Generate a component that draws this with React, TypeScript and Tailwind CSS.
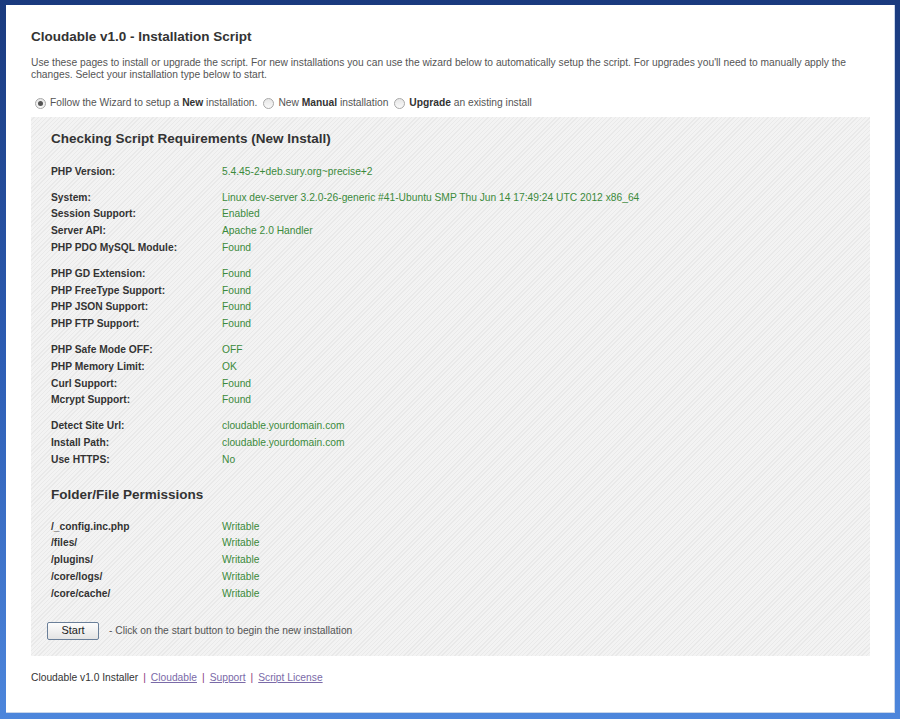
import React from "react";

const groups: [string, string][][] = [
  [["PHP Version:", "5.4.45-2+deb.sury.org~precise+2"]],
  [
    ["System:", "Linux dev-server 3.2.0-26-generic #41-Ubuntu SMP Thu Jun 14 17:49:24 UTC 2012 x86_64"],
    ["Session Support:", "Enabled"],
    ["Server API:", "Apache 2.0 Handler"],
    ["PHP PDO MySQL Module:", "Found"],
  ],
  [
    ["PHP GD Extension:", "Found"],
    ["PHP FreeType Support:", "Found"],
    ["PHP JSON Support:", "Found"],
    ["PHP FTP Support:", "Found"],
  ],
  [
    ["PHP Safe Mode OFF:", "OFF"],
    ["PHP Memory Limit:", "OK"],
    ["Curl Support:", "Found"],
    ["Mcrypt Support:", "Found"],
  ],
  [
    ["Detect Site Url:", "cloudable.yourdomain.com"],
    ["Install Path:", "cloudable.yourdomain.com"],
    ["Use HTTPS:", "No"],
  ],
];

const folders = ["/_config.inc.php", "/files/", "/plugins/", "/core/logs/", "/core/cache/"];

function Radio({ checked }: { checked?: boolean }) {
  return (
    <span className="inline-flex items-center justify-center w-[11px] h-[11px] rounded-full border border-[#a8a8a8] bg-gradient-to-b from-[#e6e6e6] to-[#fafafa] mr-[4px]">
      {checked && <span className="w-[5px] h-[5px] rounded-full bg-[#555]" />}
    </span>
  );
}

function Row({ label, value }: { label: string; value: string }) {
  return (
    <div className="flex h-[16.75px] items-center">
      <div className="w-[171px] font-bold text-[#333]">{label}</div>
      <div className="text-[#3b8a3b]">{value}</div>
    </div>
  );
}

export default function App() {
  return (
    <div
      className="w-[900px] h-[719px] pl-[6px] pt-[5px] pr-[5px] pb-[6px] bg-gradient-to-b from-[#1a3a7e] via-[#2d5db4] to-[#4d86dc]"
      style={{ fontFamily: '"Liberation Sans", Arial, sans-serif' }}
    >
      <div className="w-[889px] h-[708px] bg-white border-r border-b border-[#c9d6ea] pl-[25px] pr-[24px] pt-[24px] text-[10.25px] text-[#444]">
        <h1 className="text-[13.5px] font-bold text-[#333] leading-[16px] h-[16px]">
          Cloudable v1.0 - Installation Script
        </h1>
        <p className="mt-[12px] leading-[12px] text-[#555]">
          Use these pages to install or upgrade the script. For new installations you can use the wizard below to automatically setup the script. For upgrades you'll need to manually apply the changes. Select your installation type below to start.
        </p>
        <div className="mt-[15px] h-[14px] flex items-center text-[#555] pl-[4px]">
          <Radio checked />
          <span>
            Follow the Wizard to setup a <b className="text-[#333]">New</b> installation.
          </span>
          <span className="ml-[6px] inline-flex items-center">
            <Radio />
            <span>
              New <b className="text-[#333]">Manual</b> installation
            </span>
          </span>
          <span className="ml-[6px] inline-flex items-center">
            <Radio />
            <span>
              <b className="text-[#333]">Upgrade</b> an existing install
            </span>
          </span>
        </div>
        <div className="mt-[7px] w-[839px] h-[539px] bg-[repeating-linear-gradient(135deg,#f3f3f3_0px,#f3f3f3_2px,#e9e9e9_2px,#e9e9e9_3px)] pl-[20px] pt-[13px]">
          <h2 className="text-[13.5px] font-bold text-[#333] leading-[18px] h-[18px]">
            Checking Script Requirements (New Install)
          </h2>
          <div className="mt-[15px] flex flex-col gap-[9.25px]">
            {groups.map((g, i) => (
              <div key={i} className="flex flex-col">
                {g.map(([l, v]) => (
                  <Row key={l} label={l} value={v} />
                ))}
              </div>
            ))}
          </div>
          <h2 className="mt-[18px] text-[13.5px] font-bold text-[#333] leading-[18px] h-[18px]">
            Folder/File Permissions
          </h2>
          <div className="mt-[14px] flex flex-col">
            {folders.map((f) => (
              <Row key={f} label={f} value="Writable" />
            ))}
          </div>
          <div className="mt-[20px] flex items-center">
            <button className="w-[52px] h-[18px] rounded-[2px] border border-[#6a7f99] bg-gradient-to-b from-[#fdfdfd] to-[#e4e4e4] text-[11px] text-[#222] leading-none -ml-[4px]">
              Start
            </button>
            <span className="ml-[10px] text-[#555]">- Click on the start button to begin the new installation</span>
          </div>
        </div>
        <div className="mt-[16px] flex items-center h-[12px] text-[#333]">
          <span>Cloudable v1.0 Installer</span>
          <span className="mx-[5px] text-[#8a3a7a]">|</span>
          <a className="underline text-[#7a6aa8]">Cloudable</a>
          <span className="mx-[5px] text-[#8a3a7a]">|</span>
          <a className="underline text-[#7a6aa8]">Support</a>
          <span className="mx-[5px] text-[#8a3a7a]">|</span>
          <a className="underline text-[#7a6aa8]">Script License</a>
        </div>
      </div>
    </div>
  );
}
